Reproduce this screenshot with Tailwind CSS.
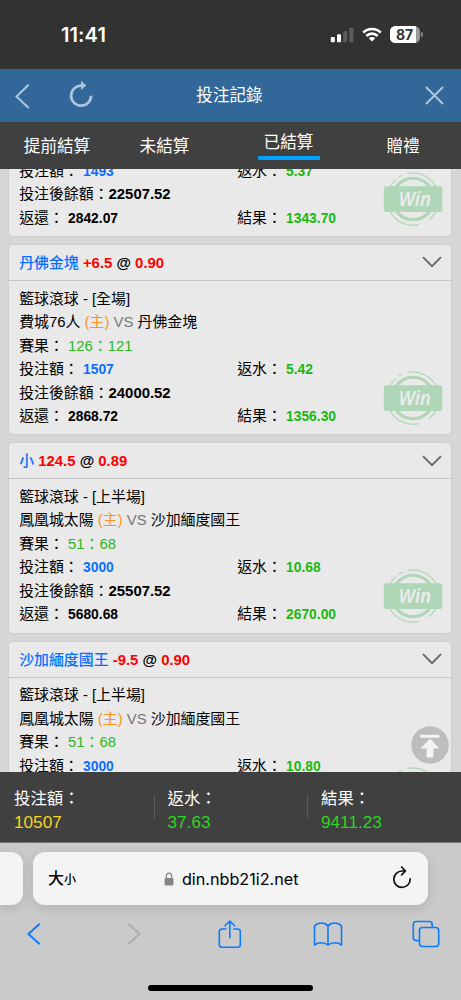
<!DOCTYPE html>
<html lang="zh-Hant">
<head>
<meta charset="utf-8">
<title>投注記錄</title>
<script src="https://cdn.jsdelivr.net/npm/@tailwindcss/browser@4"></script>
</head>
<body class="w-[461px] h-[1000px] overflow-hidden flex flex-col bg-[#cacaca] font-['Liberation_Sans','Noto_Sans_CJK_TC',sans-serif] text-black">
<svg class="hidden">
  <symbol id="win" viewBox="0 0 60 60">
    <g fill="none" stroke="#afd6b6">
      <circle cx="30" cy="30" r="20.7" stroke-width="3"/>
      <path d="M15.4 8.3A26 26 0 0 1 19.5 6.2M24.5 4.6A26 26 0 0 1 54 20M6.5 19A26 26 0 0 1 13 10.6M6.3 41A26 26 0 0 0 36 55.6M46 50.7A26 26 0 0 0 54.4 39" stroke-width="1.2"/>
    </g>
    <rect x=".8" y="17.2" width="58.6" height="25.8" rx="2.5" fill="#afd6b6"/>
    <text x="31.8" y="37.3" text-anchor="middle" textLength="32.5" lengthAdjust="spacingAndGlyphs" class="font-['Noto_Sans','Open_Sans',sans-serif] font-semibold italic text-[19px]" fill="#ebebeb">Win</text>
  </symbol>
  <symbol id="down" viewBox="0 0 20 12"><path d="M1 1.2L10 10.2L19 1.2" fill="none" stroke="#666" stroke-width="1.7"/></symbol>
</svg>

<!-- Status bar -->
<div class="h-[69px] shrink-0 bg-[#323232] flex items-center justify-between pl-[61px] pr-[38px] text-white">
  <span class="font-['Inter'] font-semibold text-[20px] leading-none tracking-[0.1px]">11:41</span>
  <div class="flex items-center">
    <svg class="w-6 h-4" viewBox="0 0 24 16" fill="#fff"><rect x=".8" y="10" width="4" height="5.3" rx="1"/><rect x="7" y="7.3" width="4" height="8" rx="1"/><rect x="13.2" y="4" width="4" height="11.3" rx="1" fill="#5c5c5c"/><rect x="19.4" y=".8" width="4" height="14.5" rx="1" fill="#5c5c5c"/></svg>
    <svg class="w-5 h-[15px] ml-2" viewBox="0 0 20 15" fill="none" stroke="#fff" stroke-width="2.7"><path d="M1.2 5.6A12.5 12.5 0 0 1 18.8 5.6M4.4 9A8 8 0 0 1 15.6 9"/><path d="M10 14.5L6.8 11.2A4.6 4.6 0 0 1 13.2 11.2Z" fill="#fff" stroke="none"/></svg>
    <div class="relative ml-2 w-[30px] h-[17px] rounded-[5.5px] overflow-hidden bg-[#999] flex items-center font-['Inter'] font-bold text-[14px] leading-none text-[#323232]"><div class="bg-white w-[26px] h-full"></div><span class="absolute left-[6px] top-[1.5px] tracking-[-0.2px]">87</span></div>
    <div class="w-[2px] h-[5px] ml-px rounded-r-full bg-[#888]"></div>
  </div>
</div>

<!-- Title bar -->
<div class="h-[53px] shrink-0 bg-[#326799] grid grid-cols-[1fr_auto_1fr] items-center pl-[15px] pr-[17px]">
  <div class="flex items-center">
    <svg class="w-[15px] h-[26px]" viewBox="0 0 15 26" fill="none" stroke="#adc6e0" stroke-width="2"><path d="M13.7 1.8L1.5 13.5L13.7 25"/></svg>
    <svg class="w-6 h-7 ml-[39px] mb-[4px]" viewBox="0 0 24 28" fill="none" stroke="#adc6e0" stroke-width="2.7"><path d="M12.5 5.7A10 10 0 1 0 22.1 15.8"/><path d="M12 .8L17.3 5.5L12 10Z" fill="#adc6e0" stroke="none"/></svg>
  </div>
  <h1 class="text-[16.6px] leading-6 text-white">投注記錄</h1>
  <svg class="justify-self-end w-[19px] h-[19px]" viewBox="0 0 19 19" fill="none" stroke="#adc6e0" stroke-width="2"><path d="M1 1L18 18M18 1L1 18"/></svg>
</div>

<!-- Tabs -->
<div class="h-[47px] shrink-0 bg-[#404040] flex text-[16.6px] leading-6 text-white text-center">
  <div class="w-[114px] pt-[13px]">提前結算</div>
  <div class="w-[101px] pt-[13px]">未結算</div>
  <div class="w-[147px] pt-[9px] flex flex-col items-center">已結算<div class="w-[62px] h-[3.5px] mt-px bg-[#00a2ff] rounded-[1px]"></div></div>
  <div class="w-[82px] pt-[13px]">贈禮</div>
</div>

<!-- Records -->
<div class="relative h-[603px] shrink-0 overflow-hidden bg-[#d6d6d6] text-[14.9px] leading-[23.45px]">
  <div class="flex flex-col gap-[9px] pl-[9.4px] pr-[9.6px] -mt-[122.4px]">

    <div class="relative h-[189.3px] shrink-0 rounded-[4px] bg-[#e9e9e9] shadow-[0_0_2px_#bbb]">
      <div class="h-[36px] border-b border-[#c6c6c6]"></div>
      <div class="pl-[9.8px] pt-[77.2px]">
        <div class="grid grid-cols-[218px_1fr]"><div>投注額： <b class="inline-block origin-left scale-x-[0.93] text-[#0a6fff]">1493</b></div><div>返水： <b class="inline-block origin-left scale-x-[0.93] text-[#1cb80f]">5.37</b></div></div>
        <div>投注後餘額：<b>22507.52</b></div>
        <div class="grid grid-cols-[218px_1fr]"><div>返還： <b class="inline-block origin-left scale-x-[0.93]">2842.07</b></div><div>結果： <b class="inline-block origin-left scale-x-[0.93] text-[#1cb80f]">1343.70</b></div></div>
      </div>
      <svg class="absolute right-[8.6px] top-[122.6px] w-[60px] h-[60px]"><use href="#win"/></svg>
    </div>

    <div class="relative h-[189.3px] shrink-0 rounded-[4px] bg-[#e9e9e9] shadow-[0_0_2px_#bbb]">
      <div class="h-[36px] border-b border-[#c6c6c6] flex items-center justify-between pl-[9.8px] pr-[9px]"><div class="pt-[3px] font-bold text-[#f00]"><span class="font-medium text-[#0a6fff]">丹佛金塊</span> +6.5 <span class="text-black">@</span> 0.90</div><svg class="w-5 h-3"><use href="#down"/></svg></div>
      <div class="pl-[9.8px] pt-[6.8px]">
        <div>籃球滾球 - [全場]</div>
        <div>費城76人 <span class="text-[#ff9419]">(主)</span> <span class="text-[#777]">VS</span> 丹佛金塊</div>
        <div>賽果： <span class="text-[#2cb922]">126：121</span></div>
        <div class="grid grid-cols-[218px_1fr]"><div>投注額： <b class="inline-block origin-left scale-x-[0.93] text-[#0a6fff]">1507</b></div><div>返水： <b class="inline-block origin-left scale-x-[0.93] text-[#1cb80f]">5.42</b></div></div>
        <div>投注後餘額：<b>24000.52</b></div>
        <div class="grid grid-cols-[218px_1fr]"><div>返還： <b class="inline-block origin-left scale-x-[0.93]">2868.72</b></div><div>結果： <b class="inline-block origin-left scale-x-[0.93] text-[#1cb80f]">1356.30</b></div></div>
      </div>
      <svg class="absolute right-[8.6px] top-[122.6px] w-[60px] h-[60px]"><use href="#win"/></svg>
    </div>

    <div class="relative h-[189.3px] shrink-0 rounded-[4px] bg-[#e9e9e9] shadow-[0_0_2px_#bbb]">
      <div class="h-[36px] border-b border-[#c6c6c6] flex items-center justify-between pl-[9.8px] pr-[9px]"><div class="pt-[3px] font-bold text-[#f00]"><span class="font-medium text-[#0a6fff]">小</span> 124.5 <span class="text-black">@</span> 0.89</div><svg class="w-5 h-3"><use href="#down"/></svg></div>
      <div class="pl-[9.8px] pt-[6.8px]">
        <div>籃球滾球 - [上半場]</div>
        <div>鳳凰城太陽 <span class="text-[#ff9419]">(主)</span> <span class="text-[#777]">VS</span> 沙加緬度國王</div>
        <div>賽果： <span class="text-[#2cb922]">51：68</span></div>
        <div class="grid grid-cols-[218px_1fr]"><div>投注額： <b class="inline-block origin-left scale-x-[0.93] text-[#0a6fff]">3000</b></div><div>返水： <b class="inline-block origin-left scale-x-[0.93] text-[#1cb80f]">10.68</b></div></div>
        <div>投注後餘額：<b>25507.52</b></div>
        <div class="grid grid-cols-[218px_1fr]"><div>返還： <b class="inline-block origin-left scale-x-[0.93]">5680.68</b></div><div>結果： <b class="inline-block origin-left scale-x-[0.93] text-[#1cb80f]">2670.00</b></div></div>
      </div>
      <svg class="absolute right-[8.6px] top-[122.6px] w-[60px] h-[60px]"><use href="#win"/></svg>
    </div>

    <div class="relative h-[189.3px] shrink-0 rounded-[4px] bg-[#e9e9e9] shadow-[0_0_2px_#bbb]">
      <div class="h-[36px] border-b border-[#c6c6c6] flex items-center justify-between pl-[9.8px] pr-[9px]"><div class="pt-[3px] font-bold text-[#f00]"><span class="font-medium text-[#0a6fff]">沙加緬度國王</span> -9.5 <span class="text-black">@</span> 0.90</div><svg class="w-5 h-3"><use href="#down"/></svg></div>
      <div class="pl-[9.8px] pt-[6.8px]">
        <div>籃球滾球 - [上半場]</div>
        <div>鳳凰城太陽 <span class="text-[#ff9419]">(主)</span> <span class="text-[#777]">VS</span> 沙加緬度國王</div>
        <div>賽果： <span class="text-[#2cb922]">51：68</span></div>
        <div class="grid grid-cols-[218px_1fr]"><div>投注額： <b class="inline-block origin-left scale-x-[0.93] text-[#0a6fff]">3000</b></div><div>返水： <b class="inline-block origin-left scale-x-[0.93] text-[#1cb80f]">10.80</b></div></div>
      </div>
      <svg class="absolute right-[8.6px] top-[122.6px] w-[60px] h-[60px]"><use href="#win"/></svg>
    </div>
  </div>

  <!-- Back to top -->
  <svg class="absolute right-[12px] bottom-[8px] w-[38px] h-[38px]" viewBox="0 0 38 38"><circle cx="19" cy="19" r="18.7" fill="#bdbdbd"/><rect x="9.3" y="8.7" width="19.4" height="3" rx="1" fill="#f4f4f4"/><path d="M19 12.8L28.5 22.6H22.4V30.5Q22.4 31.5 21.4 31.5H16.6Q15.6 31.5 15.6 30.5V22.6H9.5Z" fill="#f4f4f4"/></svg>
</div>

<!-- Totals -->
<div class="h-[70.5px] shrink-0 bg-[#404040] border-b border-[#777] flex items-center text-[16.4px] leading-6 text-white">
  <div class="w-[153.5px] pl-[14px] pt-[7px]"><div>投注額：</div><div class="text-[17.2px] text-[#f5d423]">10507</div></div>
  <div class="w-px h-6 bg-[#5c5c5c]"></div>
  <div class="w-[152.5px] pl-[13px] pt-[7px]"><div>返水：</div><div class="text-[17.2px] text-[#2bd51f]">37.63</div></div>
  <div class="w-px h-6 bg-[#5c5c5c]"></div>
  <div class="pl-[13px] pt-[7px]"><div>結果：</div><div class="text-[17.2px] text-[#2bd51f]">9411.23</div></div>
</div>

<!-- Browser toolbar -->
<div class="grow bg-[#cacaca] pt-[9.5px] flex flex-col">
  <div class="flex gap-[10px] h-[53px] shrink-0">
    <div class="w-[23px] rounded-r-[12px] bg-[#f4f4f4] shadow-[0_3px_12px_rgba(0,0,0,0.12)]"></div>
    <div class="w-[395px] rounded-[12px] bg-[#f4f4f4] shadow-[0_3px_12px_rgba(0,0,0,0.12)] flex items-center justify-between pl-[15px] pr-[16px] font-['Inter','Noto_Sans_CJK_TC',sans-serif]">
      <div class="w-[50px] font-medium leading-6 text-[16px]">大<span class="text-[12px]">小</span></div>
      <div class="flex items-center pl-[3px] text-[16.2px] leading-6">
        <svg class="w-[10px] h-[14px] mr-[7.5px]" viewBox="0 0 10 14"><path d="M2.3 7V4A2.7 2.9 0 0 1 7.7 4V7" fill="none" stroke="#85858a" stroke-width="1.3"/><rect x=".5" y="6" width="9" height="7.5" rx="1.5" fill="#85858a"/></svg>
        <span>din.nbb21i2.net</span>
      </div>
      <div class="w-[50px] flex justify-end"><svg class="w-5 h-6 mb-[3px]" viewBox="0 0 20 24" fill="none" stroke="#111" stroke-width="1.7" stroke-linecap="round" stroke-linejoin="round"><path d="M12.9 6H10.3A8.2 8.2 0 1 0 18.2 13.8M9.6 2L13.5 6L9.6 9.8"/></svg></div>
    </div>
  </div>
  <div class="flex items-center h-[30px] mt-[14px] shrink-0 pl-[27px]">
    <svg class="w-[14px] h-6" viewBox="0 0 14 24" fill="none" stroke="#0a7cff" stroke-width="1.9" stroke-linecap="round" stroke-linejoin="round"><path d="M12.2 2.3L1.4 12L12.2 21.7"/></svg>
    <svg class="w-[14px] h-6 ml-[86px]" viewBox="0 0 14 24" fill="none" stroke="#aaa" stroke-width="1.7" stroke-linecap="round" stroke-linejoin="round"><path d="M1.8 2.3L12.6 12L1.8 21.7"/></svg>
    <svg class="w-6 h-[30px] ml-[77px] mb-[1px]" viewBox="0 0 24 30" fill="none" stroke="#0a7cff" stroke-width="1.6" stroke-linecap="round" stroke-linejoin="round"><path d="M8 10H4Q1.3 10 1.3 12.7V25.5Q1.3 28.2 4 28.2H19.6Q22.3 28.2 22.3 25.5V12.7Q22.3 10 19.6 10H15.7M11.8 18.7V2M7 6.8L11.8 2L16.6 6.8"/></svg>
    <svg class="w-[30px] h-[26px] ml-[71px]" viewBox="0 0 30 26" fill="none" stroke="#0a7cff" stroke-width="1.6" stroke-linecap="round" stroke-linejoin="round"><path d="M15 5Q12.7 2 8.3 2Q4 2 1.5 5V24Q4.4 21.7 8.3 21.7Q12.4 21.7 15 24Q17.6 21.7 21.7 21.7Q25.6 21.7 28.5 24V5Q26 2 21.7 2Q17.3 2 15 5V24"/></svg>
    <svg class="w-7 h-7 ml-[68.5px]" viewBox="0 0 28 28" fill="none" stroke="#0a7cff" stroke-width="1.6"><path d="M7.5 20.6H4.3Q1.3 20.6 1.3 17.6V4.5Q1.3 1.5 4.3 1.5H17.3Q20.2 1.5 20.2 4.5V7.3"/><rect x="7.5" y="7.5" width="19.2" height="19" rx="3"/></svg>
  </div>
  <div class="mt-auto mb-[9.5px] w-[165px] h-[6px] self-center rounded-full bg-black"></div>
</div>
</body>
</html>
